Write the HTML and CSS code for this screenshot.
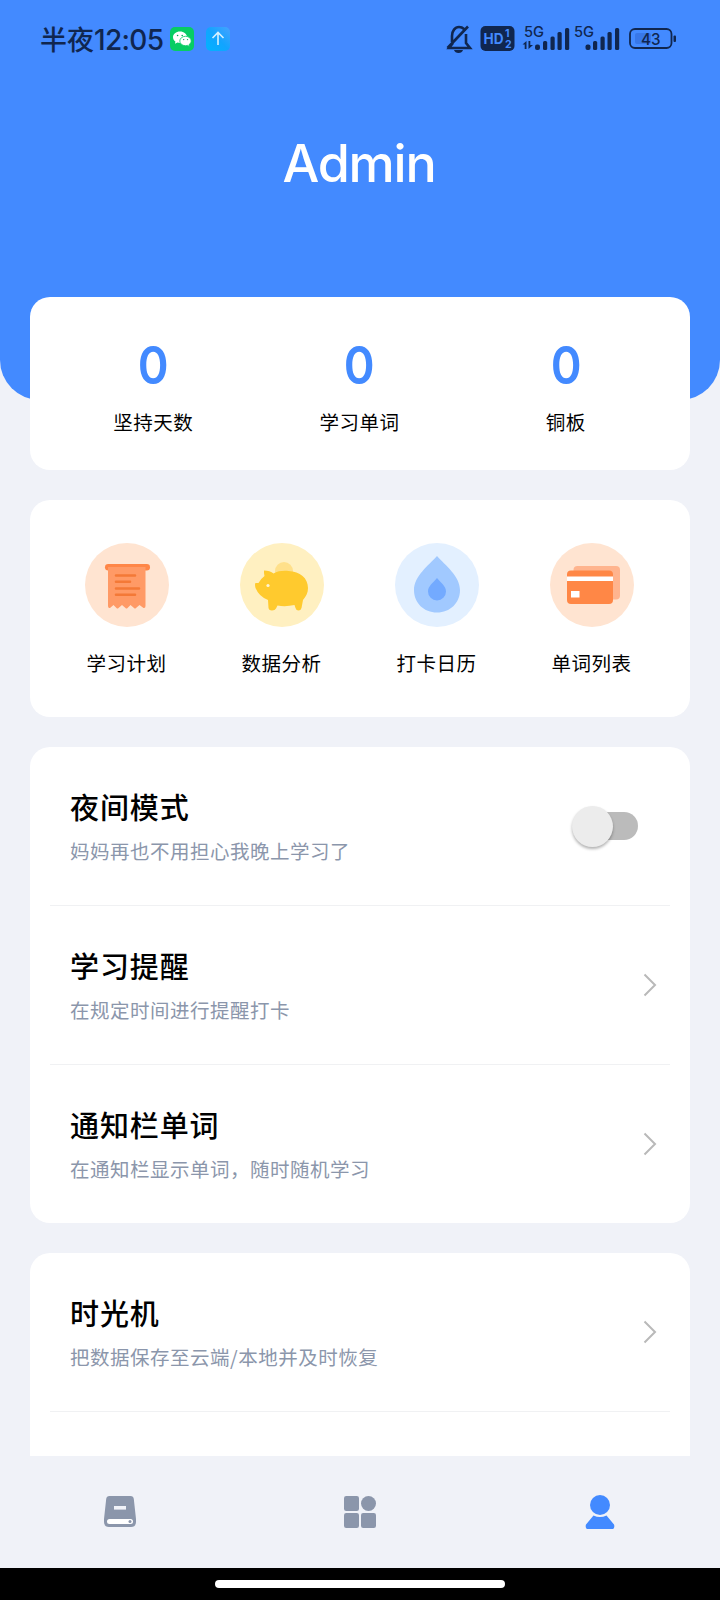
FILE: index.html
```html
<!DOCTYPE html>
<html lang="zh-CN">
<head>
<meta charset="utf-8">
<title>Admin</title>
<link rel="stylesheet" href="styles.css">
</head>
<body>
<div class="screen">
  <header class="hero">
    <div class="status">
      <span class="clock">半夜<span class="digits">12:05</span></span>
      <svg class="app-icons" width="60" height="24" viewBox="0 0 60 24">
        <defs>
          <linearGradient id="sky" x1="1" y1="0" x2="0" y2="1"><stop offset="0" stop-color="#46a2ff"/><stop offset=".5" stop-color="#12a4ff"/><stop offset="1" stop-color="#00b4ff"/></linearGradient>
        </defs>
        <rect width="24" height="24" rx="5" fill="#07cd63"/>
        <path d="M10 4.500c-4 0-7 2.500-7 5.700 0 1.800 1 3.300 2.400 4.300l-.4 2.200 2.400-1.200c.8.200 1.700.4 2.600.4 4 0 7-2.500 7-5.700s-3-5.700-7-5.700z" fill="#fff"/>
        <path d="M15.500 9.300c-3.200 0-5.700 2.100-5.700 4.700s2.500 4.700 5.700 4.700c.7 0 1.400-.1 2-.3l2 1-.4-1.800c1.300-.9 2.100-2.100 2.100-3.600 0-2.600-2.500-4.700-5.700-4.700z" fill="#fff" stroke="#07cd63" stroke-width=".8"/>
        <g fill="#07a852"><circle cx="7.600" cy="8.500" r=".8"/><circle cx="12.200" cy="8.500" r=".8"/><circle cx="13.700" cy="12.600" r=".7"/><circle cx="17.500" cy="12.600" r=".7"/></g>
        <rect x="36" width="24" height="24" rx="5" fill="url(#sky)"/>
        <path d="M48 18V6M42.500 11L48 5.500 53.500 11" fill="none" stroke="#d4f0ff" stroke-width="1.600"/>
      </svg>
      <svg class="signals" width="234" height="32" viewBox="444 22 234 32">
        <path d="M452 42V36c0-5 3-9 7-9 2 0 4 1 5 2M466 34v9l4 5h-21l4-5M447.500 48L468 26.500" fill="none" stroke="#10264f" stroke-width="2.600"/>
        <path d="M454 50h9q-1 3-4.500 3t-4.500-3z" fill="#10264f"/>
        <rect x="480.500" y="26" width="34" height="25" rx="5" fill="#10264f"/>
        <g class="hd"><text x="483.500" y="43.700" font-size="14" textLength="20" lengthAdjust="spacingAndGlyphs">HD</text><text x="505" y="36.700" font-size="10.500">1</text><text x="505" y="48" font-size="10.500">2</text></g>
        <g class="net"><text x="524" y="36.800" font-size="14" textLength="20" lengthAdjust="spacingAndGlyphs">5G</text><text x="574" y="36.800" font-size="14" textLength="20" lengthAdjust="spacingAndGlyphs">5G</text></g>
        <g fill="#10264f">
          <path d="M522.500 44.500l4-3.500v8h-1.800v-4.500zM528.500 41h1.800v4h2.700l-4.500 4z"/>
          <rect x="535" y="44.500" width="5" height="5.500" rx="2"/><rect x="543" y="41" width="4.200" height="9" rx="1.500"/><rect x="550.500" y="36.500" width="4.200" height="13.500" rx="1.500"/><rect x="557.500" y="32" width="4.200" height="18" rx="1.500"/><rect x="565" y="28" width="4.200" height="22" rx="1.500"/>
          <rect x="585.500" y="44.500" width="5" height="5.500" rx="2"/><rect x="593" y="41" width="4.200" height="9" rx="1.500"/><rect x="600.500" y="36.500" width="4.200" height="13.500" rx="1.500"/><rect x="607.500" y="32" width="4.200" height="18" rx="1.500"/><rect x="615" y="28" width="4.200" height="22" rx="1.500"/>
        </g>
        <rect x="630" y="29" width="41.500" height="19" rx="5" fill="none" stroke="#10264f" stroke-width="1.800"/>
        <rect x="635" y="33" width="16" height="11" rx="2" fill="#3877e8"/>
        <rect x="673.500" y="35.500" width="2.500" height="6.500" rx="1" fill="#10264f"/>
        <g class="net"><text x="641" y="44.500" font-size="16" textLength="19.500" lengthAdjust="spacingAndGlyphs">43</text></g>
      </svg>
    </div>
    <h1 class="name">Admin</h1>
  </header>

  <main class="content">
    <section class="card stats">
      <div class="stat"><b class="stat-value">0</b><span class="label">坚持天数</span></div>
      <div class="stat"><b class="stat-value">0</b><span class="label">学习单词</span></div>
      <div class="stat"><b class="stat-value">0</b><span class="label">铜板</span></div>
    </section>

    <section class="card tools">
      <div class="tool">
        <svg width="84" height="84" viewBox="0 0 84 84">
          <circle cx="42" cy="42" r="42" fill="#ffe4d1"/>
          <rect x="20" y="21" width="45" height="6.500" rx="3.200" fill="#ff8647"/>
          <path d="M23 24h37.500v39q0 2.500-2 2L54.500 62l-3.500 3q-1 1-2 0l-3.500-3-3 3q-1 1-2 0l-3.500-3-3.500 3q-1 1-2 0l-3-3-3.500 3q-2 .5-2-2z" fill="#ff9a66"/>
          <path d="M31 32.500h19M31 38.700h14M31 45.500h23M31 51.700h19" stroke="#f47937" stroke-width="2.600" stroke-linecap="round"/>
        </svg>
        <span class="label">学习计划</span>
      </div>
      <div class="tool">
        <svg width="84" height="84" viewBox="0 0 84 84">
          <circle cx="42" cy="42" r="42" fill="#fff0c1"/>
          <circle cx="44" cy="28" r="9" fill="#ffe08a"/>
          <path d="M24 27.500q6 0 9.500 3c4-2.500 10-3 15-2.500C60 28.500 68 35 68 45c0 5-2 8-5 12l-1.500 8q-.7 2.500-3 2.500t-3-2.500l-1-3q-9 2-17 .5l-1.500 3q-1 2-4 2t-3.500-2.500l-.5-8Q19 53.500 15.500 45q-1-4 0-5h3q2-4 6-7-.8-3-.5-5.500z" fill="#ffca2e"/>
          <circle cx="28" cy="42.500" r="1.600" fill="#fff5d6"/>
        </svg>
        <span class="label">数据分析</span>
      </div>
      <div class="tool">
        <svg width="84" height="84" viewBox="0 0 84 84">
          <circle cx="42" cy="42" r="42" fill="#e3f0ff"/>
          <path d="M42 13C50 22 65 33 65 47c0 13-10 22.500-23 22.500S19 60 19 47c0-14 15-25 23-34z" fill="#a1c9ff"/>
          <path d="M42 35c4 5 9 8 9 13.500a9 9 0 0 1-18 0C33 43 38 40 42 35z" fill="#73aaff"/>
        </svg>
        <span class="label">打卡日历</span>
      </div>
      <div class="tool">
        <svg width="84" height="84" viewBox="0 0 84 84">
          <circle cx="42" cy="42" r="42" fill="#ffe4d1"/>
          <rect x="23.500" y="23" width="46.500" height="33.500" rx="4" fill="#ffb48e"/>
          <rect x="17" y="27.500" width="46" height="33.500" rx="4" fill="#ff8746"/>
          <path d="M17 33.500h46v4.500H17zM21 48h8.500v6.500H21z" fill="#fff"/>
        </svg>
        <span class="label">单词列表</span>
      </div>
    </section>

    <section class="card list">
      <div class="row">
        <div class="texts"><h2 class="title">夜间模式</h2><p class="desc">妈妈再也不用担心我晚上学习了</p></div>
        <span class="switch"><i class="knob"></i></span>
      </div>
      <div class="row">
        <div class="texts"><h2 class="title">学习提醒</h2><p class="desc">在规定时间进行提醒打卡</p></div>
        <svg class="chevron" width="14" height="24" viewBox="0 0 14 24"><path d="M1.500 1.500L12 12 1.500 22.500"/></svg>
      </div>
      <div class="row">
        <div class="texts"><h2 class="title">通知栏单词</h2><p class="desc">在通知栏显示单词，随时随机学习</p></div>
        <svg class="chevron" width="14" height="24" viewBox="0 0 14 24"><path d="M1.500 1.500L12 12 1.500 22.500"/></svg>
      </div>
    </section>

    <section class="card list">
      <div class="row">
        <div class="texts"><h2 class="title">时光机</h2><p class="desc">把数据保存至云端/本地并及时恢复</p></div>
        <svg class="chevron" width="14" height="24" viewBox="0 0 14 24"><path d="M1.500 1.500L12 12 1.500 22.500"/></svg>
      </div>
      <div class="row"></div>
    </section>
  </main>

  <nav class="tabs">
    <span class="tab">
      <svg width="32" height="36" viewBox="0 0 32 36">
        <path d="M5.500 2h21q3 0 3.300 3L32 25v3q0 5-5 5H5q-5 0-5-5v-3L2.200 5q.3-3 3.300-3z" fill="#8b96ab"/>
        <rect x="10" y="12" width="12" height="3.600" fill="#f0f2f8"/>
        <rect x="3" y="25" width="26" height="5" rx="2.500" fill="#fff"/><circle cx="26" cy="27.500" r="1.500" fill="#8b96ab"/>
      </svg>
    </span>
    <span class="tab">
      <svg width="32" height="36" viewBox="0 0 32 36" fill="#8b96ab">
        <rect y="2" width="15" height="15" rx="2.200"/><circle cx="24.500" cy="9.500" r="7.500"/><rect y="19" width="15" height="15" rx="2.200"/><rect x="17" y="19" width="15" height="15" rx="2.200"/>
      </svg>
    </span>
    <span class="tab">
      <svg width="32" height="36" viewBox="0 0 32 36" fill="#438aff">
        <circle cx="16" cy="11" r="10"/><path d="M9.500 21.500q6.500 3 13 0l7.500 9q1 2.500-.8 4.500H2.800Q1 33 2 30.500z"/>
      </svg>
    </span>
  </nav>
  <footer class="gesture"><span class="pill"></span></footer>
</div>
</body>
</html>
```
FILE: styles.css
```css
* { box-sizing: border-box; margin: 0; padding: 0; }
body {
  width: 720px;
  height: 1600px;
  overflow: hidden;
  background: #f0f2f8;
  color: #000;
  font-family: "Noto Sans CJK SC", sans-serif;
}
.screen { display: flex; flex-direction: column; width: 720px; height: 1600px; }
.hero {
  flex: none;
  height: 400px;
  margin-bottom: -103px;
  border-radius: 0 0 40px 40px;
  background: #438aff;
}
.status { display: flex; align-items: center; height: 78px; padding: 0 42px 0 40px; }
.clock { width: 130px; font-size: 27px; line-height: 40px; font-weight: 500; color: #10264f; white-space: nowrap; }
.digits { font-family: Inter, sans-serif; font-size: 28px; font-weight: 500; letter-spacing: -.7px; }
.signals { margin-left: auto; margin-top: -2px; }
.hd { fill: #438aff; font-family: Inter, sans-serif; font-weight: 700; }
.net { fill: #10264f; font-family: Inter, sans-serif; font-weight: 500; }
.name {
  margin-top: 51px;
  padding-right: 2px;
  color: #fff;
  font-family: Inter, sans-serif;
  font-size: 52px;
  line-height: 70px;
  font-weight: 500;
  letter-spacing: -1.200px;
  text-align: center;
}
.content {
  position: relative;
  display: flex;
  flex: 1;
  flex-direction: column;
  gap: 30px;
  min-height: 0;
  padding: 0 30px;
  overflow: hidden;
}
.card { flex: none; border-radius: 20px; background: #fff; }
.stats { display: flex; justify-content: center; height: 173px; padding: 36px 21px 0 20px; }
.stat { display: flex; flex-direction: column; align-items: center; width: 206.500px; }
.stat-value { color: #438aff; font-family: Inter, sans-serif; font-size: 52px; line-height: 66px; font-weight: 600; transform: scaleX(.9); }
.label { font-size: 19.500px; line-height: 30px; letter-spacing: .5px; }
.stat .label { margin-top: 8px; }
.tools { display: flex; height: 217px; padding: 43px 21px 0 19px; }
.tool { display: flex; flex: 1; flex-direction: column; align-items: center; }
.tool .label { margin-top: 21px; }
.list { padding: 0 20px; }
.row { display: flex; align-items: center; height: 159px; padding: 0 13px 0 20px; border-bottom: 1px solid #f0f1f3; }
.row:last-child { height: 158px; border-bottom: 0; }
.texts { flex: 1; margin-top: -2px; }
.title { font-size: 29px; line-height: 44px; font-weight: 500; letter-spacing: .9px; margin-top: -1px; }
.desc { color: #8b96ab; font-size: 19.500px; line-height: 30px; letter-spacing: .5px; margin-top: 8px; }
.chevron { fill: none; stroke: #b9b9b9; stroke-width: 2; }
.switch { display: flex; align-items: center; width: 60px; height: 28px; margin-right: 19px; border-radius: 14px; background: #bbb; }
.knob { flex: none; width: 41px; height: 41px; margin-left: -6px; border-radius: 50%; background: #ececec; box-shadow: 0 2px 3px rgba(0, 0, 0, .3); }
.tabs { display: flex; flex: none; height: 112px; padding-top: 38px; }
.tab { flex: 1; text-align: center; }
.gesture { display: flex; flex: none; justify-content: center; height: 32px; padding-top: 12px; background: #000; }
.pill { width: 290px; height: 8px; border-radius: 4px; background: #fff; }
```
